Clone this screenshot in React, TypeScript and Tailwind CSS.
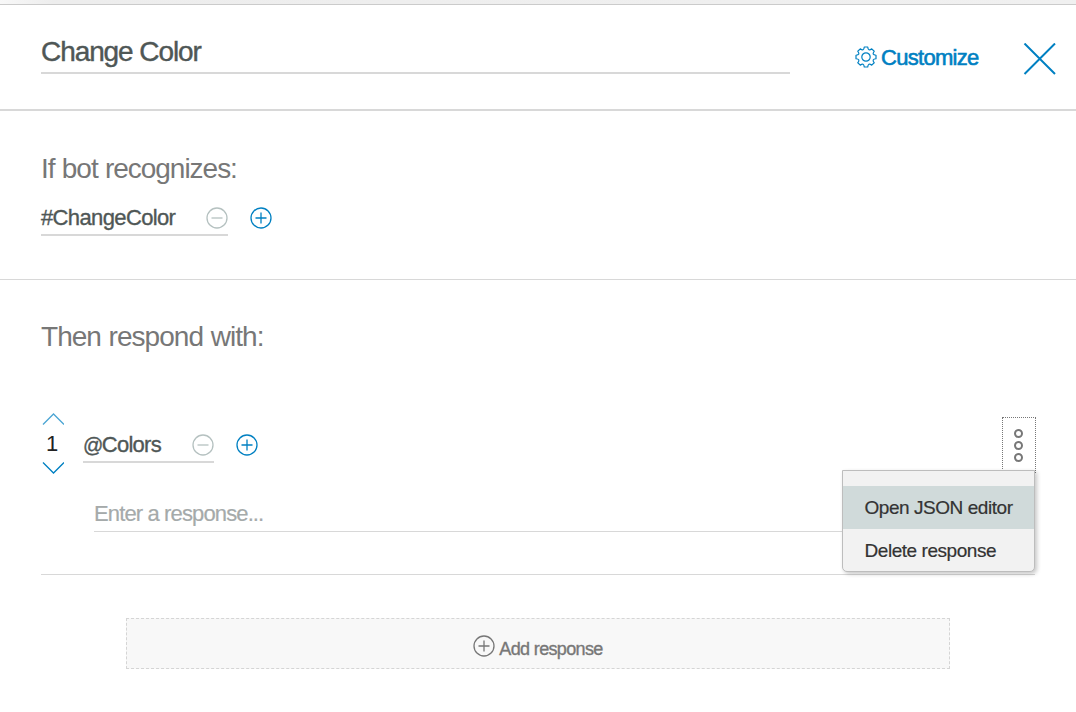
import type { ReactNode } from "react";

function CircleIcon({ plus = false, className = "" }: { plus?: boolean; className?: string }) {
  return (
    <svg viewBox="0 0 22 22" className={`block h-[22px] w-[22px] shrink-0 ${className}`} fill="none" stroke="currentColor" strokeWidth="1.3">
      <circle cx="11" cy="11" r="10" />
      <path d={plus ? "M5.5 11h11M11 5.5v11" : "M5.5 11h11"} />
    </svg>
  );
}

function GearIcon() {
  return (
    <svg viewBox="0 0 22 22" className="-mt-0.5 block h-[22px] w-[22px]" fill="none" stroke="currentColor" strokeWidth="1.2" strokeLinejoin="round">
      <circle cx="11" cy="11" r="4.2" />
      <path d="M9.26 1H12.74Q13.07 5.7 16.74 2.81L19.19 5.26Q16.3 8.93 21 9.26V12.74Q16.3 13.07 19.19 16.74L16.74 19.19Q13.07 16.3 12.74 21H9.26Q8.93 16.3 5.26 19.19L2.81 16.74Q5.7 13.07 1 12.74V9.26Q5.7 8.93 2.81 5.26L5.26 2.81Q8.93 5.7 9.26 1Z" />
    </svg>
  );
}

function Chevron({ down = false, className = "" }: { down?: boolean; className?: string }) {
  return (
    <svg viewBox="0 0 22 12" className={`ml-[0.5px] block h-3 w-[22px] ${className}`} fill="none" stroke="currentColor" strokeWidth="1.3">
      <path d={down ? "M1 .5L11.5 11L22 .5" : "M1 11.5L11.5 1L22 11.5"} />
    </svg>
  );
}

function Condition({ children, className }: { children: ReactNode; className: string }) {
  return (
    <div className="flex items-start">
      <div className={`flex h-[30px] items-start justify-between border-b-2 border-[#d8d8d8] pt-px ${className}`}>
        <span className="text-[22px] leading-[22px] text-[#4f5756] [-webkit-text-stroke:0.35px_#4f5756]">{children}</span>
        <CircleIcon className="mr-[0.5px] text-[#b5c1c0]" />
      </div>
      <CircleIcon plus className="mt-px ml-[22px] text-[#0080c2]" />
    </div>
  );
}

export default function App() {
  return (
    <div className="flex h-[712px] w-[1076px] flex-col overflow-hidden bg-white font-['Liberation_Sans',Arial,sans-serif] whitespace-nowrap">
      <div className="h-[5px] shrink-0 border-b border-[#cbcbcb] bg-linear-to-r from-[#f8f8f8] via-[#ededed] via-5% to-[#f0f0f0]" />
      <header className="flex h-[106px] shrink-0 items-start border-b-2 border-[#d8d8d8] pl-[41px]">
        <h1 className="mt-[31px] h-[38px] w-[749px] border-b-2 border-[#d8d8d8] text-[28px] leading-8 tracking-[-1.08px] text-[#4f5756] [-webkit-text-stroke:0.4px_#4f5756]">Change Color</h1>
        <button className="mt-[41px] ml-[65px] flex w-[125px] items-center gap-1 text-[22px] leading-[24px] tracking-[-0.7px] text-[#0080c2] [-webkit-text-stroke:0.6px_#0080c2]">
          <GearIcon />
          <span>Customize</span>
        </button>
        <button className="mt-[38px] ml-[43px] text-[#0080c2]" aria-label="Close">
          <svg viewBox="0 0 34 34" className="block h-[34px] w-[34px]" fill="none" stroke="currentColor" strokeWidth="2">
            <path d="M1.5 .5L32 31M32 .5L1.5 31" />
          </svg>
        </button>
      </header>

      <section className="h-[169px] shrink-0 border-b border-[#d8d8d8] pt-[42px] pl-[41px]">
        <h2 className="h-[53px] text-[28px] leading-8 tracking-[-1.02px] [word-spacing:0.5px] text-[#777777]">If bot recognizes:</h2>
        <Condition className="w-[187px] tracking-[-0.63px]">#ChangeColor</Condition>
      </section>

      <section className="flex flex-col pt-[41px] pr-[41px] pl-[41px]">
        <h2 className="h-[96px] text-[28px] leading-8 tracking-[-0.96px] [word-spacing:0.8px] text-[#777777]">Then respond with:</h2>
        <div className="relative h-[158px] border-b border-[#d8d8d8]">
          <div className="flex">
            <div className="flex w-[42px] flex-col items-start text-[#0080c2]">
              <Chevron className="-mt-[4px] opacity-70" />
              <span className="h-[37px] w-[22px] pt-[8px] text-center text-[22px] leading-[22px] text-[#222222]">1</span>
              <Chevron down />
            </div>
            <div className="pt-[16px]">
              <Condition className="w-[131px] tracking-[-0.75px]"><span className="text-[20px] tracking-[-1.5px]">@</span>Colors</Condition>
            </div>
          </div>
          <div className="mt-[27px] ml-[53px] h-[31px] border-b border-[#d8d8d8] text-[22px] leading-[26px] tracking-[-0.87px] text-[#a5aaaa] [-webkit-text-stroke:0.2px_#a5aaaa]">Enter a response...</div>

          <div className="absolute top-0 right-[-1px] flex h-14 w-[34px] flex-col items-center gap-[3px] border border-dotted border-[#777777] pt-[11px] pr-px">
            <i className="h-[9px] w-[9px] rounded-full border-2 border-[#777777]" />
            <i className="h-[9px] w-[9px] rounded-full border-2 border-[#777777]" />
            <i className="h-[9px] w-[9px] rounded-full border-2 border-[#777777]" />
          </div>
          <div className="absolute top-[53px] right-0 h-[102px] w-[193px] rounded-b-[5px] border border-[#bdbdbd] bg-[#f2f2f2] pt-[15px] text-[19px] tracking-[-0.45px] text-[#333333] shadow-[2px_2px_4px_rgba(0,0,0,0.22)] [-webkit-text-stroke:0.2px_#333333]">
            <div className="h-[43px] bg-[#d0dada] pl-[21.5px] leading-[43px]">Open JSON editor</div>
            <div className="h-[42px] pl-[21.5px] leading-[43px]">Delete response</div>
          </div>
        </div>
        <button className="mt-[43px] ml-[85px] flex h-[51px] w-[824px] items-start justify-center gap-[4px] border border-dashed border-[#d5d5d5] bg-[#f8f8f8] pt-[16px] text-[18px] text-[#777777]">
          <CircleIcon plus />
          <span className="mt-[3px] leading-[22px] tracking-[-0.65px] [-webkit-text-stroke:0.35px_#777777]">Add response</span>
        </button>
      </section>
    </div>
  );
}
